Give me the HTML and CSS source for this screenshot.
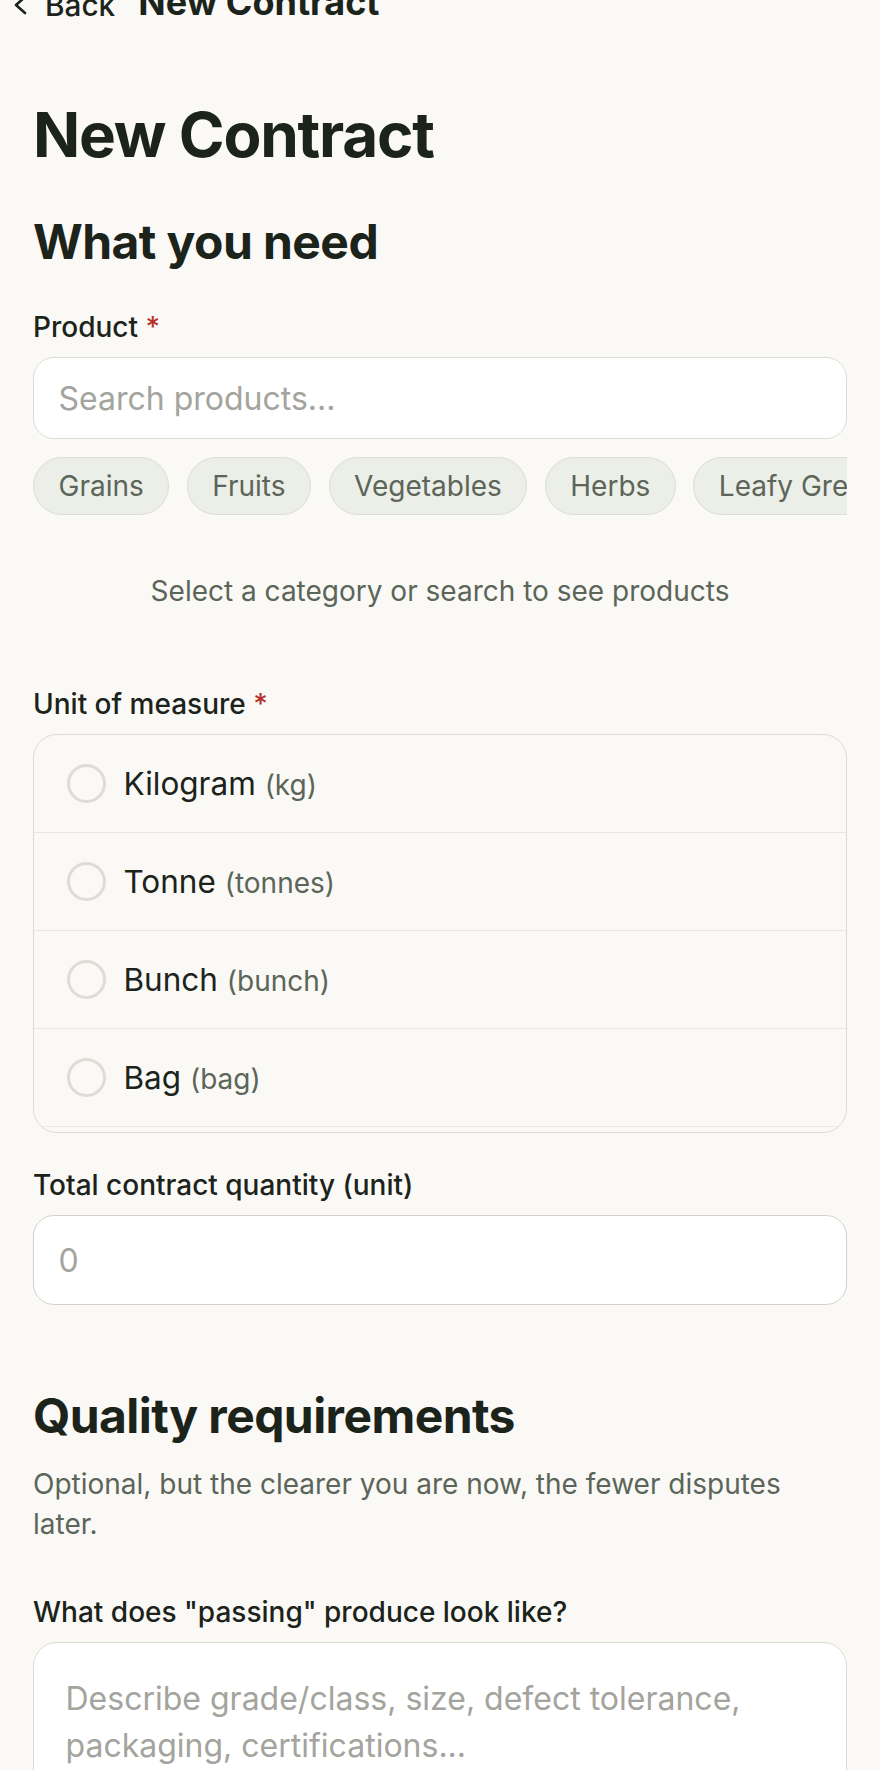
FILE: index.html
```html
<!DOCTYPE html>
<html lang="en">

<head>
    <meta charset="UTF-8">
    <meta name="viewport" content="width=device-width, initial-scale=1.0">
    <title>New Contract</title>

    <link rel="stylesheet" href="styles.css">
</head>

<body>
    <header class="topbar">
        <a class="back-link" href="#">
            <svg class="back-icon" viewBox="0 0 14 20" fill="none" stroke="currentColor" stroke-width="2.6" stroke-linecap="round" stroke-linejoin="round">
                <polyline points="12,2 3,10 12,18" />
            </svg>
            <span>Back</span>
        </a>
        <span class="topbar-title">New Contract</span>
    </header>

    <main class="page">
        <h1 class="page-title">New Contract</h1>

        <section class="form-section">
            <h2 class="section-title">What you need</h2>

            <div class="field">
                <label class="field-label" for="product">Product <span class="required">*</span></label>
                <input class="text-input search-input" id="product" type="text" placeholder="Search products...">
                <div class="chips">
                    <button class="chip" type="button">Grains</button>
                    <button class="chip" type="button">Fruits</button>
                    <button class="chip" type="button">Vegetables</button>
                    <button class="chip" type="button">Herbs</button>
                    <button class="chip" type="button">Leafy Greens</button>
                </div>
                <p class="empty-note">Select a category or search to see products</p>
            </div>

            <div class="field">
                <span class="field-label">Unit of measure <span class="required">*</span></span>
                <div class="option-list">
                    <label class="option">
                        <input type="radio" name="unit" value="kg">
                        <span class="option-text">Kilogram <span class="option-unit">(kg)</span></span>
                    </label>
                    <label class="option">
                        <input type="radio" name="unit" value="tonnes">
                        <span class="option-text">Tonne <span class="option-unit">(tonnes)</span></span>
                    </label>
                    <label class="option">
                        <input type="radio" name="unit" value="bunch">
                        <span class="option-text">Bunch <span class="option-unit">(bunch)</span></span>
                    </label>
                    <label class="option">
                        <input type="radio" name="unit" value="bag">
                        <span class="option-text">Bag <span class="option-unit">(bag)</span></span>
                    </label>
                </div>
            </div>

            <div class="field">
                <label class="field-label" for="quantity">Total contract quantity (unit)</label>
                <input class="text-input qty-input" id="quantity" type="number" placeholder="0">
            </div>
        </section>

        <section class="form-section">
            <h2 class="section-title with-desc">Quality requirements</h2>
            <p class="section-desc">Optional, but the clearer you are now, the fewer disputes later.</p>

            <div class="field">
                <label class="field-label" for="passing">What does "passing" produce look like?</label>
                <textarea class="text-area" id="passing" rows="4" placeholder="Describe grade/class, size, defect tolerance, packaging, certifications..."></textarea>
            </div>
        </section>
    </main>
</body>

</html>
```

FILE: styles.css
```css
body {
    margin: 0;
    background-color: #faf9f5;
    color: #1b231b;
    font-family: 'Inter', 'Noto Sans', sans-serif;
}

/* top bar (page is scrolled a little, so it sits partly above the fold) */
.topbar {
    display: flex;
    align-items: baseline;
    gap: 23px;
    height: 44px;
    margin-top: -20px;
    padding: 0 13px;
    line-height: 44px;
}

.back-link {
    display: inline-flex;
    align-items: center;
    gap: 18px;
    color: #1b231b;
    text-decoration: none;
    font-size: 29.75px;
    font-weight: 500;
}

.back-icon {
    width: 14px;
    height: 20px;
}

.topbar-title {
    font-size: 36px;
    font-weight: 700;
}

.page {
    padding: 74px 33px 40px;
}

.page-title {
    margin: 0 0 41px;
    font-size: 62px;
    line-height: 74px;
    font-weight: 700;
    letter-spacing: -0.02em;
}

.form-section + .form-section {
    margin-top: 82px;
}

.section-title {
    margin: 0 0 36px;
    font-size: 48px;
    line-height: 58px;
    font-weight: 700;
    letter-spacing: -0.012em;
}

.section-title.with-desc {
    margin-bottom: 18.5px;
}

.section-desc {
    margin: 0 0 48.5px;
    color: #5b6559;
    font-size: 28px;
    line-height: 40px;
}

.field {
    margin-bottom: 32px;
}

.field-label {
    display: block;
    margin-bottom: 10px;
    font-size: 28px;
    line-height: 40px;
    font-weight: 500;
}

.required {
    color: #b3302a;
}

.text-input,
.text-area {
    display: block;
    width: 100%;
    box-sizing: border-box;
    border: 1.5px solid #dcdcd5;
    border-radius: 21px;
    background-color: #fff;
    color: #1b231b;
    font-family: inherit;
    font-size: 32px;
    outline: none;
}

.text-input::placeholder,
.text-area::placeholder {
    color: #a3a49d;
}

.search-input {
    height: 82px;
    padding: 0 24.5px;
}

.qty-input {
    height: 90px;
    padding: 0 24.5px;
    border-color: #d2d3cb;
}

.text-area {
    padding: 32px 31.5px;
    line-height: 47px;
    border-radius: 24px;
    resize: vertical;
}

.chips {
    display: flex;
    gap: 17.5px;
    margin-top: 18px;
    overflow-x: auto;
    scrollbar-width: none;
}

.chip {
    flex: none;
    padding: 7px 24.5px;
    border: 1.5px solid #dcddd6;
    border-radius: 999px;
    background-color: #eceee8;
    color: #5b6559;
    font-family: inherit;
    font-size: 28px;
    line-height: 42px;
    cursor: pointer;
}

.empty-note {
    margin: 0;
    padding: 56px 0 41px;
    text-align: center;
    color: #5b6559;
    font-size: 28px;
    line-height: 40px;
}

.option-list {
    border: 1px solid #dcdcd5;
    border-radius: 24px;
    overflow: hidden;
    padding-bottom: 5px;
}

.option {
    display: flex;
    align-items: center;
    gap: 18px;
    height: 97px;
    padding: 0 32.5px;
    border-bottom: 1px solid #e8e8e2;
    cursor: pointer;
}

.option input {
    appearance: none;
    flex: none;
    width: 39px;
    height: 39px;
    margin: 0;
    border: 3.5px solid #dddcd6;
    border-radius: 50%;
    background: transparent;
}

.option-text {
    font-size: 31.5px;
    line-height: 1.5;
}

.option-unit {
    color: #5b6559;
    font-size: 28px;
}
```
